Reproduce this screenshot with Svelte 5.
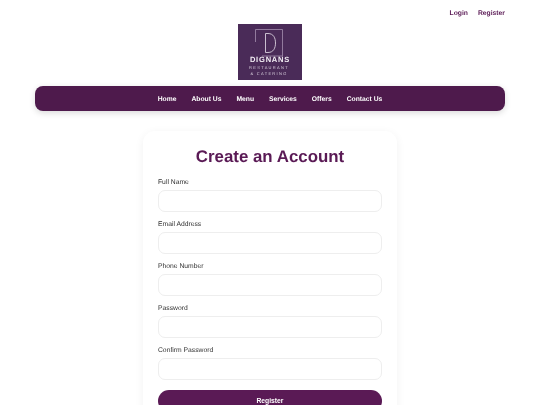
<script>
  const topLinks = ["Login", "Register"];
  const navLinks = ["Home", "About Us", "Menu", "Services", "Offers", "Contact Us"];
  const fields = [
    { label: "Full Name", type: "text" },
    { label: "Email Address", type: "email" },
    { label: "Phone Number", type: "tel" },
    { label: "Password", type: "password" },
    { label: "Confirm Password", type: "password" }
  ];
</script>

<div class="page">
  <div class="top">
    {#each topLinks as link}
      <a href="#top">{link}</a>
    {/each}
  </div>

  <div class="logo">
    <svg width="64" height="56" viewBox="0 0 64 56">
      <rect width="64" height="56" fill="#4a2b58" />
      <path d="M17.500 18V5.500H44.500V32H24" fill="none" stroke="#a48fae" stroke-width="0.8" />
      <path d="M27.500 9.500V28.500M27.500 9.500H30C35.500 9.500 37.500 14 37.500 19C37.500 24 35.500 28.500 30 28.500H27.500" fill="none" stroke="#d8cfdd" stroke-width="0.9" />
      <text x="32" y="38" class="l1">DIGNANS</text>
      <text x="31" y="45" class="l2">RESTAURANT</text>
      <text x="31" y="50.500" class="l2">&amp; CATERING</text>
    </svg>
  </div>

  <nav>
    {#each navLinks as link}
      <a href="#top">{link}</a>
    {/each}
  </nav>

  <form class="card" on:submit|preventDefault>
    <h1>Create an Account</h1>
    {#each fields as field}
      <div class="field">
        <label for={field.label}>{field.label}</label>
        <input id={field.label} type={field.type} />
      </div>
    {/each}
    <button type="submit">Register</button>
  </form>
</div>

<style>
  :global(body) {
    margin: 0;
    background: #fff;
    font-family: "Liberation Sans", Arial, sans-serif;
    text-rendering: geometricPrecision;
  }

  .page {
    height: 405px;
    overflow: hidden;
    display: flex;
    flex-direction: column;
    align-items: center;
    will-change: transform;
  }

  .top {
    align-self: flex-end;
    display: flex;
    flex-shrink: 0;
    gap: 10px;
    padding: 8.500px 35px 0 0;
    height: 15.500px;
  }

  .top a {
    font-size: 6.750px;
    line-height: 9px;
    font-weight: 700;
    color: #5a1a55;
    text-decoration: none;
  }

  .logo {
    height: 56px;
    flex-shrink: 0;
    margin-bottom: 6px;
  }

  .logo svg {
    display: block;
  }

  .l1 {
    font-size: 7.500px;
    font-weight: 700;
    fill: #f3eff5;
    text-anchor: middle;
    letter-spacing: 0.8px;
  }

  .l2 {
    font-size: 4px;
    fill: #d9d0de;
    text-anchor: middle;
    letter-spacing: 1.300px;
  }

  nav {
    box-sizing: border-box;
    width: 470px;
    height: 25px;
    flex-shrink: 0;
    margin-bottom: 20px;
    padding-top: 1px;
    background: #4e1a4c;
    border-radius: 8px;
    box-shadow: 0 2px 6px rgba(0, 0, 0, 0.15);
    display: flex;
    justify-content: center;
    align-items: center;
    gap: 15px;
  }

  nav a {
    color: #fff;
    font-size: 6.750px;
    font-weight: 700;
    text-decoration: none;
  }

  .card {
    box-sizing: border-box;
    width: 254px;
    flex-shrink: 0;
    padding: 15px;
    background: #fff;
    border-radius: 12px;
    box-shadow: 0 2px 10px rgba(0, 0, 0, 0.06);
  }

  h1 {
    margin: 0 0 11px;
    text-align: center;
    font-size: 16.875px;
    line-height: 21px;
    font-weight: 700;
    color: #5a1a55;
  }

  .field {
    margin-bottom: 8.500px;
  }

  label {
    display: block;
    font-size: 6.750px;
    line-height: 9px;
    color: #333;
    margin-bottom: 2.500px;
  }

  input {
    display: block;
    box-sizing: border-box;
    width: 100%;
    height: 22px;
    border: 1px solid #eee;
    border-radius: 7px;
    background: #fff;
    outline: none;
  }

  button {
    display: block;
    width: 100%;
    height: 22px;
    margin-top: 10px;
    padding: 0;
    border: 0;
    border-radius: 11px;
    background: #5a1a55;
    color: #fff;
    font-family: inherit;
    font-size: 6.750px;
    font-weight: 700;
  }
</style>
